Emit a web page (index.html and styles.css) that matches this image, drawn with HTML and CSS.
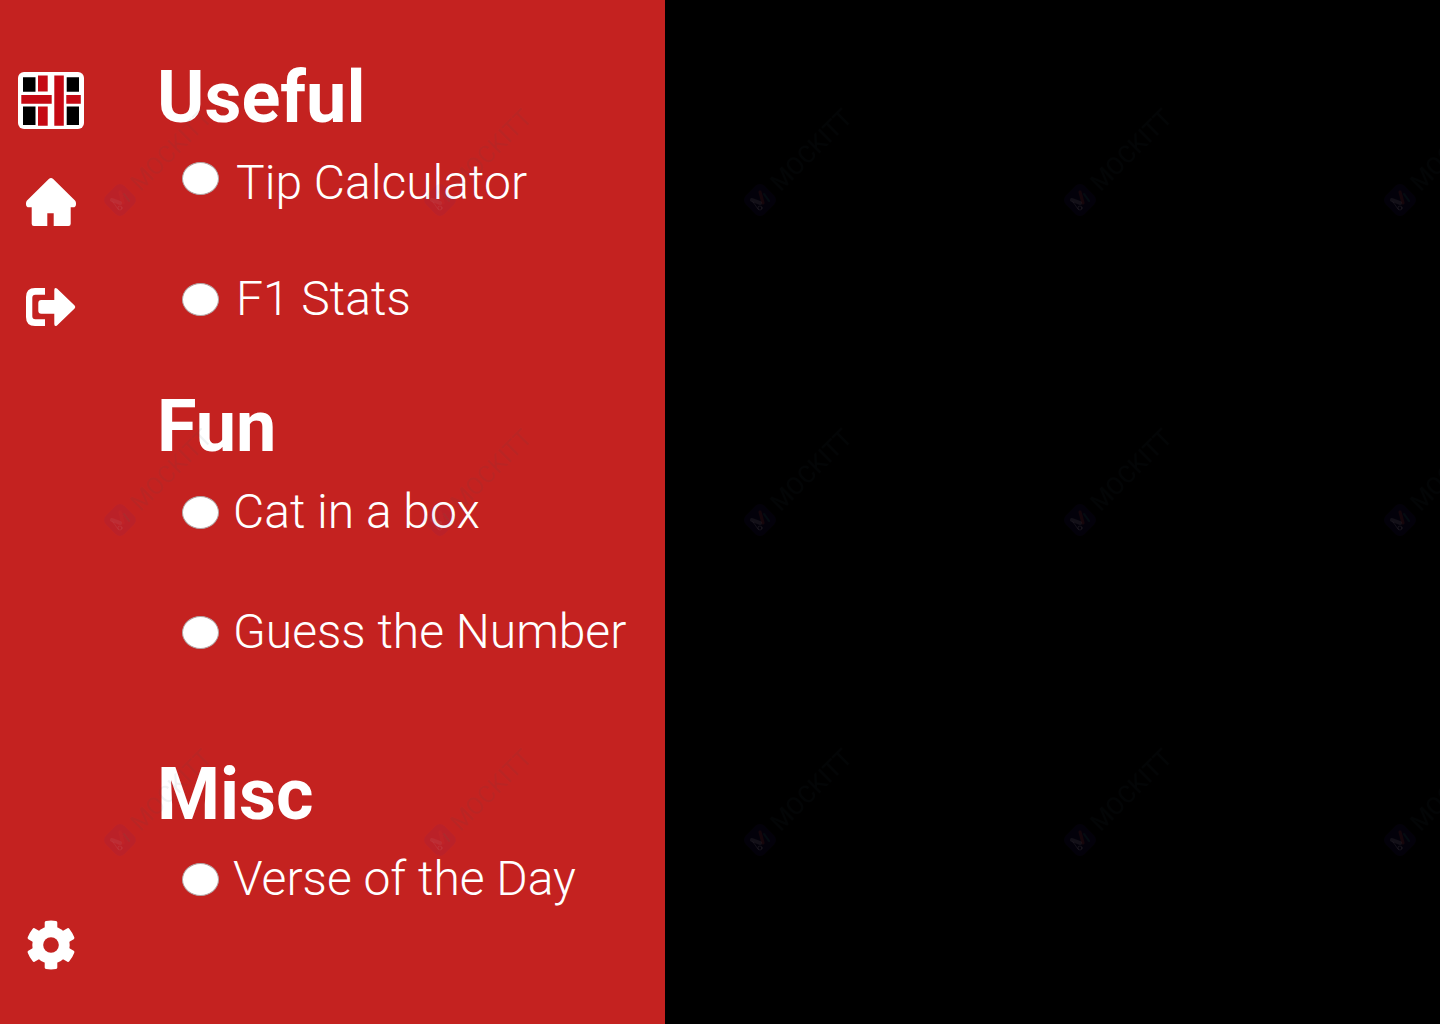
FILE: index.html
```html
<!DOCTYPE html>
<html lang="en">
<head>
<meta charset="utf-8">
<meta name="viewport" content="width=device-width, initial-scale=1">
<title>Menu</title>
<link rel="stylesheet" href="styles.css">
</head>
<body>
<div class="page">
  <aside class="drawer">
    <nav class="rail" aria-label="Main">
      <a class="logo" href="#" aria-label="Start">
        <svg width="66" height="57" viewBox="0 0 66 57">
          <rect width="66" height="57" rx="6" fill="#fff"/>
          <path fill="#000" d="M5 5.3h12.5v14.5H5zM48.7 5.3H61v14.5H48.7zM5 34.4h12.5V53H5zM48.7 34.4H61V53H48.7z"/>
          <path fill="#c50a14" d="M20 3.4h9.7v16H20zM20 34.4h9.7v19.3H20zM3.3 23h30.4v8.8H3.3zM36.3 3.4h9.5v50.3h-9.5zM48.3 23h14.5v8.8H48.3z"/>
        </svg>
      </a>
      <div class="rail-links">
        <a href="#" aria-label="Home">
          <svg width="50" height="50" viewBox="0 0 50 50" fill="#fff"><path d="M22.8 2Q25 .2 27.2 2L49 23.6q1 1 1 2.6v1q0 3.1-3 3.1h-2.3V46.800q0 2.200-2.200 2.200H27.700V36.300h-6.400V49H7.900q-2.200 0-2.200-2.200V30.300H3q-3 0-3-3.100v-1q0-1.600 1-2.600z"/></svg>
        </a>
        <a href="#" aria-label="Log out">
          <svg width="50" height="50" viewBox="0 0 50 50" fill="#fff"><path d="M19 6v6.700H9.300q-3 0-3 3v18.600q0 3 3 3H19V44H9Q0 44 0 35V15Q0 6 9 6z"/><path d="M28.300 8q0-3 2.700-1.500L48.600 23.400q1.400 1.600 0 3.200L31 43.500q-2.700 1.500-2.700-1.500V31.700H15.300q-3 0-3-3V21q0-3 3-3h13z"/></svg>
        </a>
      </div>
      <a class="settings" href="#" aria-label="Settings">
        <svg width="50" height="50" viewBox="0 0 50 50">
          <g fill="#fff"><circle cx="25" cy="25" r="18.700"/>
          <path id="teeth" d="M18.700 2.400Q18.700 1.200 20 1q5-.8 10 0 1.300.2 1.300 1.400v45.200q0 1.200-1.300 1.400-5 .8-10 0-1.300-.2-1.300-1.400z"/>
          <use href="#teeth" transform="rotate(60 25 25)"/><use href="#teeth" transform="rotate(120 25 25)"/></g>
          <circle cx="25" cy="25" r="7.800" fill="#c42220"/>
        </svg>
      </a>
    </nav>
    <main class="menu">
      <section class="group group-useful">
        <h1>Useful</h1>
        <ul>
          <li class="tall"><input type="radio" name="tool" id="tip"><label for="tip">Tip Calculator</label></li>
          <li><input type="radio" name="tool" id="f1"><label for="f1">F1 Stats</label></li>
        </ul>
      </section>
      <section class="group group-fun">
        <h1>Fun</h1>
        <ul>
          <li><input type="radio" name="tool" id="cat"><label for="cat">Cat in a box</label></li>
          <li><input type="radio" name="tool" id="guess"><label for="guess">Guess the Number</label></li>
        </ul>
      </section>
      <section class="group">
        <h1>Misc</h1>
        <ul>
          <li><input type="radio" name="tool" id="verse"><label for="verse">Verse of the Day</label></li>
        </ul>
      </section>
    </main>
  </aside>
  <svg class="watermark" aria-hidden="true">
    <defs>
      <pattern id="mark" width="320" height="320" patternUnits="userSpaceOnUse">
        <g transform="translate(120 200)">
          <rect x="-13" y="-13" width="26" height="26" rx="6" transform="rotate(45)" fill="#3214aa" fill-opacity=".06"/>
          <g fill="none" stroke-linecap="round" stroke-opacity=".08">
            <path d="M-8 0 0 3" stroke="#cbb" stroke-width="4"/>
            <path d="M0-8 3 3" stroke="#f03c14" stroke-width="3"/>
            <path d="M4-6 9 1" stroke="#0a8c64" stroke-width="2"/>
            <path d="M-7 2-2 9" stroke="#cbb"/>
            <circle cy="8" r="2" stroke="#cbb"/>
          </g>
          <text class="mark-text" x="20" y="9" transform="rotate(-45)">MOCKITT</text>
        </g>
      </pattern>
    </defs>
    <rect width="100%" height="100%" fill="url(#mark)"/>
  </svg>
</div>
</body>
</html>
```
FILE: styles.css
```css
* {
  box-sizing: border-box;
}

body {
  margin: 0;
  background: #000;
  color: #fff;
  font-family: Roboto, "Liberation Sans", sans-serif;
}

.page {
  position: relative;
  min-height: 100vh;
  display: flex;
}

.drawer {
  display: flex;
  width: 665px;
  max-width: 100%;
  background: #c42220;
}

.rail {
  flex: none;
  width: 102px;
  padding: 72px 0 54px;
  display: flex;
  flex-direction: column;
  align-items: center;
  gap: 48px;
}

.rail svg {
  display: block;
}

.rail-links {
  display: flex;
  flex-direction: column;
  gap: 55px;
}

.settings {
  margin-top: auto;
}

.menu {
  flex: 1;
  padding: 56px 0 54px 55px;
}

.group {
  display: flex;
  flex-direction: column;
  gap: 14px;
}

.group-useful {
  gap: 5px;
  margin-bottom: 58px;
}

.group-fun {
  gap: 15px;
  margin-bottom: 93px;
}

h1 {
  margin: 0;
  font-size: 72px;
  font-weight: 700;
  line-height: 84px;
}

ul {
  margin: 0;
  padding: 0 0 0 25px;
  list-style: none;
  display: flex;
  flex-direction: column;
  gap: 64px;
}

.group-useful ul {
  gap: 60px;
}

li {
  display: flex;
  align-items: center;
  gap: 14px;
}

.group-useful li {
  gap: 17px;
}

.tall {
  min-height: 66px;
}

.tall label {
  align-self: flex-end;
}

input {
  appearance: none;
  flex: none;
  width: 37px;
  height: 33px;
  margin: 0;
  border: 1px solid #b4a5a5;
  border-radius: 50%;
  background: #fff;
}

input:checked {
  background: #000;
}

label {
  font-size: 48px;
  font-weight: 300;
  line-height: 56px;
}

.watermark {
  position: absolute;
  inset: 0;
  width: 100%;
  height: 100%;
  pointer-events: none;
}

.mark-text {
  font-size: 24px;
  fill: #284650;
  fill-opacity: .07;
}
```
